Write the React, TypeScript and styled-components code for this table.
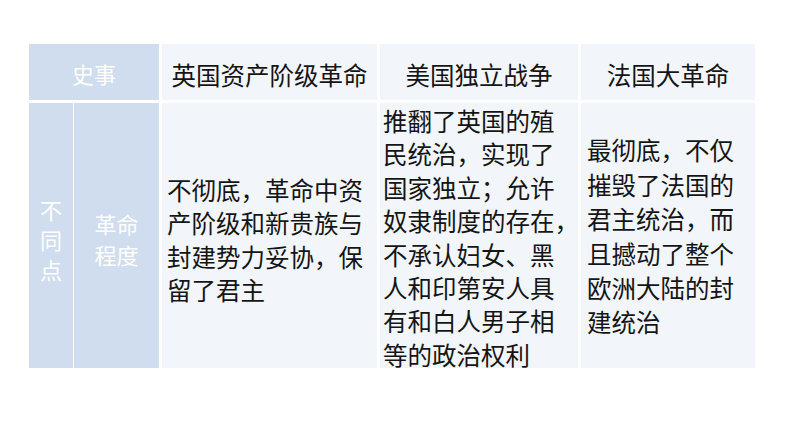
import React from "react";
import styled, { createGlobalStyle } from "styled-components";

const GlobalStyle = createGlobalStyle`
  html, body {
    margin: 0;
    padding: 0;
    background: #ffffff;
  }
  body {
    font-family: "Noto Sans CJK SC", "Noto Sans", sans-serif;
  }
`;

const Page = styled.div`
  width: 794px;
  height: 447px;
  padding: 44px 0 0 29px;
  box-sizing: border-box;
`;

const Table = styled.div`
  display: grid;
  grid-template-columns: 130px 215px 198px 174px;
  grid-template-rows: 56px 265px;
  column-gap: 3px;
  row-gap: 3px;
`;

const HeadLabel = styled.div`
  background: #cfddee;
  color: #ffffff;
  font-size: 22px;
  display: flex;
  align-items: center;
  justify-content: center;
  padding-top: 2px;
  box-sizing: border-box;
`;

const HeadCell = styled.div`
  background: #f2f5fa;
  color: #151515;
  font-size: 24.5px;
  display: flex;
  align-items: center;
  justify-content: center;
  padding-top: 4px;
  box-sizing: border-box;
  white-space: nowrap;
`;

const SideGroup = styled.div`
  display: flex;
  gap: 1px;
`;

const SideCell = styled.div<{ $width: number; $lineHeight: number }>`
  width: ${(p) => p.$width}px;
  background: #cfddee;
  color: #ffffff;
  font-size: 22px;
  line-height: ${(p) => p.$lineHeight}px;
  display: flex;
  align-items: center;
  justify-content: center;
  text-align: center;
  padding-top: 6px;
  box-sizing: border-box;
`;

const BodyCell = styled.div<{ $padLeft: number; $padTop: number; $lineHeight: number }>`
  background: #f2f5fa;
  color: #151515;
  font-size: 24.5px;
  line-height: ${(p) => p.$lineHeight}px;
  display: flex;
  align-items: center;
  padding: ${(p) => p.$padTop}px 0 0 ${(p) => p.$padLeft}px;
  box-sizing: border-box;
  white-space: nowrap;
`;

const Lines: React.FC<{ lines: string[] }> = ({ lines }) => (
  <div>
    {lines.map((l, i) => (
      <div key={i}>{l}</div>
    ))}
  </div>
);

const App: React.FC = () => {
  return (
    <Page>
      <GlobalStyle />
      <Table>
        <HeadLabel>史事</HeadLabel>
        <HeadCell>英国资产阶级革命</HeadCell>
        <HeadCell>美国独立战争</HeadCell>
        <HeadCell>法国大革命</HeadCell>

        <SideGroup>
          <SideCell $width={44} $lineHeight={30}>
            <Lines lines={["不", "同", "点"]} />
          </SideCell>
          <SideCell $width={85} $lineHeight={31}>
            <Lines lines={["革命", "程度"]} />
          </SideCell>
        </SideGroup>
        <BodyCell $padLeft={5} $padTop={8} $lineHeight={33.4}>
          <Lines
            lines={["不彻底，革命中资", "产阶级和新贵族与", "封建势力妥协，保", "留了君主"]}
          />
        </BodyCell>
        <BodyCell $padLeft={3} $padTop={4} $lineHeight={33.4}>
          <Lines
            lines={[
              "推翻了英国的殖",
              "民统治，实现了",
              "国家独立；允许",
              "奴隶制度的存在，",
              "不承认妇女、黑",
              "人和印第安人具",
              "有和白人男子相",
              "等的政治权利",
            ]}
          />
        </BodyCell>
        <BodyCell $padLeft={6} $padTop={2} $lineHeight={34.4}>
          <Lines
            lines={[
              "最彻底，不仅",
              "摧毁了法国的",
              "君主统治，而",
              "且撼动了整个",
              "欧洲大陆的封",
              "建统治",
            ]}
          />
        </BodyCell>
      </Table>
    </Page>
  );
};

export default App;
